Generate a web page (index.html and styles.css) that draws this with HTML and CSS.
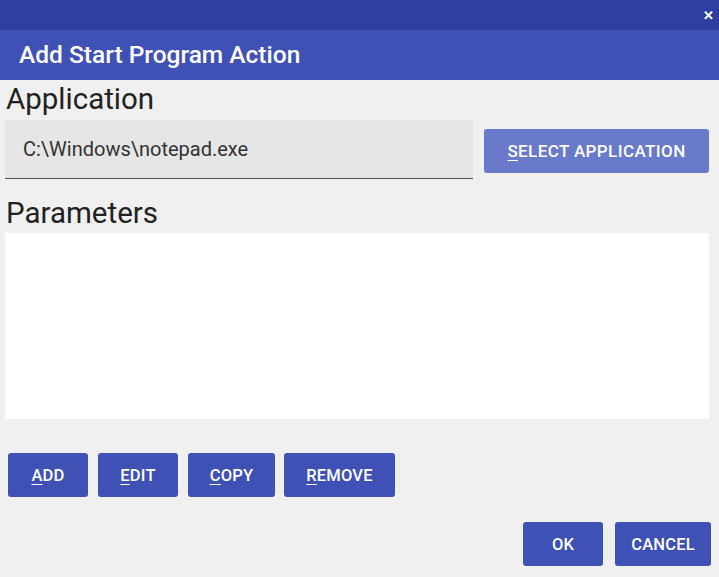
FILE: index.html
```html
<!DOCTYPE html>
<html>
<head>
<meta charset="utf-8">
<link rel="stylesheet" href="styles.css">
</head>
<body>
<div class="window">
  <div class="titlebar">
    <span class="close">✕</span>
  </div>
  <div class="header">Add Start Program Action</div>
  <div class="content">
    <div class="label">Application</div>
    <div class="app-row">
      <div class="textbox">C:\Windows\notepad.exe</div>
      <button class="btn btn-light btn-select"><u>S</u>ELECT APPLICATION</button>
    </div>
    <div class="label label-params">Parameters</div>
    <div class="params"></div>
    <div class="actions">
      <button class="btn btn-add"><u>A</u>DD</button>
      <button class="btn btn-edit"><u>E</u>DIT</button>
      <button class="btn btn-copy"><u>C</u>OPY</button>
      <button class="btn btn-remove"><u>R</u>EMOVE</button>
    </div>
    <div class="footer">
      <button class="btn btn-ok">OK</button>
      <button class="btn btn-cancel">CANCEL</button>
    </div>
  </div>
</div>
</body>
</html>
```
FILE: styles.css
```css
html, body {
  margin: 0;
  padding: 0;
  background: #f0f0f0;
  font-family: Roboto, "Liberation Sans", sans-serif;
}
.window {
  width: 719px;
  height: 577px;
  display: flex;
  flex-direction: column;
  overflow: hidden;
}
.titlebar {
  height: 30px;
  background: #303f9f;
  display: flex;
  justify-content: flex-end;
  align-items: center;
  padding-right: 4px;
}
.close {
  color: #fff;
  font-size: 13px;
  font-weight: 700;
  width: 14px;
  text-align: center;
}
.header {
  height: 50px;
  background: #3f51b5;
  color: #fff;
  font-size: 24.5px;
  font-weight: 500;
  line-height: 50px;
  padding-left: 19px;
}
.content {
  padding: 0 10px 0 5px;
  display: flex;
  flex-direction: column;
}
.label {
  font-size: 29.5px;
  color: #222;
  height: 40px;
  line-height: 38px;
  padding-left: 1px;
}
.app-row {
  display: flex;
  align-items: flex-start;
}
.textbox {
  width: 468px;
  height: 59px;
  box-sizing: border-box;
  background: #e6e6e6;
  border-bottom: 1px solid #555;
  font-size: 20px;
  color: #333;
  padding-left: 18px;
  line-height: 58px;
}
.btn {
  border: none;
  border-radius: 3px;
  background: #3f51b5;
  color: #fff;
  font-family: Roboto, "Liberation Sans", sans-serif;
  font-size: 16.5px;
  font-weight: 500;
  height: 44px;
  padding: 0;
  letter-spacing: 0.2px;
}
.btn u {
  text-underline-offset: 3px;
}
.btn-light {
  background: #6a7acb;
}
.btn-select {
  margin-left: 11px;
  margin-top: 9px;
  width: 225px;
  font-size: 17px;
  letter-spacing: 0.4px;
}
.label-params {
  margin-top: 15px;
  height: 39px;
}
.params {
  height: 186px;
  background: #fff;
}
.actions {
  display: flex;
  margin-top: 34px;
  padding-left: 3px;
  gap: 10px;
}
.btn-add, .btn-edit { width: 80px; }
.btn-copy { width: 87px; margin-left: 0; }
.btn-remove { width: 111px; margin-left: -1px; }
.footer {
  display: flex;
  justify-content: flex-end;
  margin-top: 25px;
  margin-right: -2px;
  gap: 12px;
}
.btn-ok { width: 80px; }
.btn-cancel { width: 96px; }
```
